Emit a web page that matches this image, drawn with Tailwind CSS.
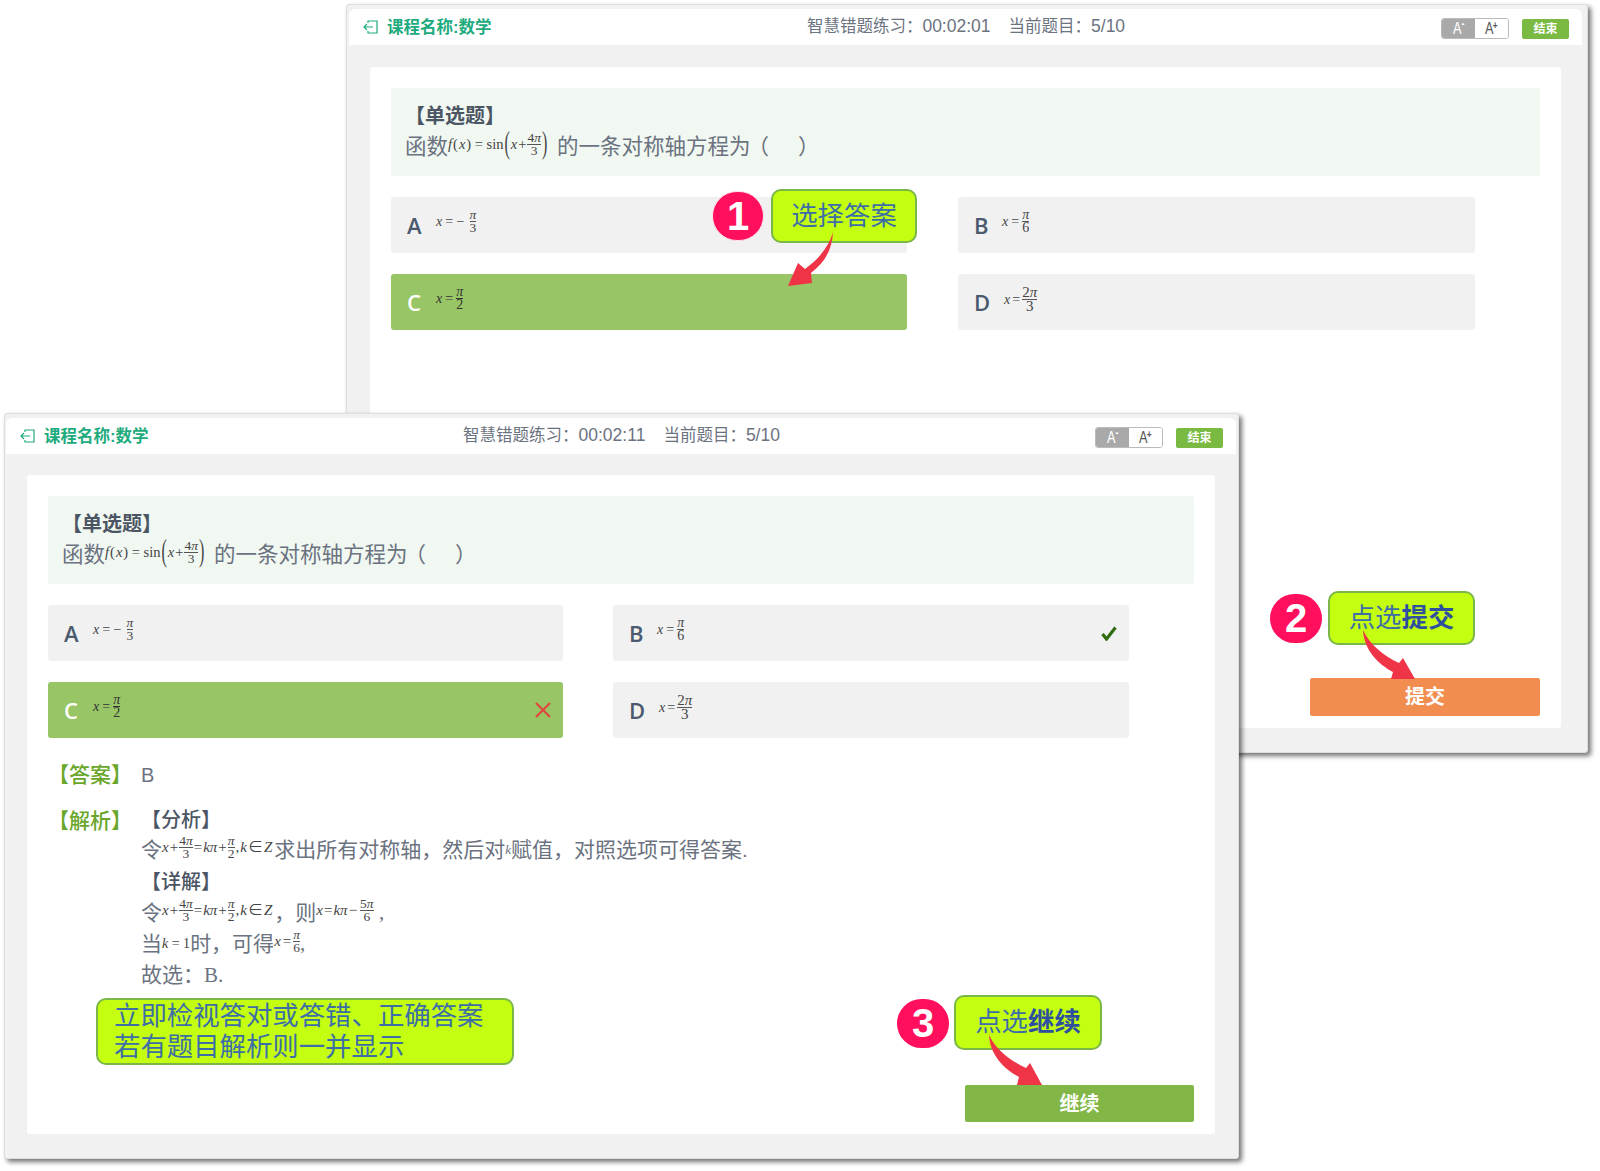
<!DOCTYPE html>
<html lang="zh-CN">
<head>
<meta charset="UTF-8">
<title>智慧错题练习</title>
<script src="https://cdn.jsdelivr.net/npm/@tailwindcss/browser@4"></script>
</head>
<body class="relative w-[1600px] h-[1171px] overflow-hidden bg-white font-['Liberation_Sans','Noto_Sans_CJK_SC',sans-serif] text-[#6b7280]">

<!-- back window: answer selection -->
<section class="absolute left-[346px] top-[4px] w-[1242px] h-[749px] flex flex-col bg-[#f1f1f1] border border-[#dedede] pl-[2px] pr-[5px] pt-[4px] pb-[2px] rounded-[3px] shadow-[3px_3px_5px_rgba(0,0,0,0.55)]">
  <header class="h-[36px] shrink-0 bg-white rounded-t-[6px] grid grid-cols-[1fr_auto_1fr] items-center pl-[14px] pr-[13px]">
    <div class="flex items-center gap-[9px] text-[16.5px] font-bold text-[#1dab7e]">
      <svg width="15" height="14" viewBox="0 0 15 14" fill="none" stroke="#1dab7e" stroke-width="1.2"><path d="M5 3V1h9v12H5v-2"/><path d="M10 7H1M4 4 1 7l3 3"/></svg>
      <span>课程名称:数学</span>
    </div>
    <div class="text-[16.5px] -mt-[1px]">智慧错题练习：<span class="text-[17.5px]">00:02:01</span><span class="ml-[18px]">当前题目：</span><span class="text-[17.5px]">5/10</span></div>
    <div class="flex items-center justify-end mt-[3px]">
      <div class="flex w-[68px] h-[21px] rounded-[3px] border border-[#bbb] overflow-hidden text-[17px]">
        <span class="w-1/2 bg-[#a9a9a9] text-white text-center leading-[19px]"><span class="inline-block scale-x-75">A<sup class="text-[12px] font-bold">-</sup></span></span>
        <span class="w-1/2 bg-white text-[#555] text-center leading-[19px]"><span class="inline-block scale-x-75">A<sup class="text-[11px] font-bold -ml-[1px]">+</sup></span></span>
      </div>
      <span class="ml-[13px] w-[47px] h-[20px] rounded-[2px] bg-[#7ab942] text-white text-[12px] font-bold text-center leading-[20px]">结束</span>
    </div>
  </header>
  <main class="flex-1 flex flex-col px-[21px] pt-[22px] pb-[23px]">
    <div class="flex-1 bg-white rounded-[3px] px-[21px] pt-[21px] pb-[12px]">
      <div class="h-[88px] bg-[#f1f8f2] rounded-[3px] pl-[14px] pt-[15px]">
        <div class="text-[20px] leading-[26px] font-bold text-[#4b5563]">【单选题】</div>
        <div class="flex items-center h-[34px] text-[21.5px] leading-[30px] mt-[1px]">
          <span>函数</span>
          <span class="inline-flex items-center gap-[1px] text-[14.5px] text-[#444] font-['Liberation_Serif'] -mt-[6px] w-[109px]"><i>f</i>(<i>x</i>)&nbsp;=&nbsp;sin<span class="inline-block text-[16px] scale-y-[2] -mt-[2px]">(</span><i>x</i>+<span class="inline-flex flex-col items-center text-[13.5px] leading-[12px]"><span class="border-b border-[#555]">4<i>π</i></span><span>3</span></span><span class="inline-block text-[16px] scale-y-[2] -mt-[2px]">)</span></span>
          <span>的一条对称轴方程为<span class="-ml-[3px]">（</span><span class="inline-block w-[17px]"></span>&nbsp; ）</span>
        </div>
      </div>
      <div class="grid grid-cols-[516px_517px] gap-x-[51px] gap-y-[21px] mt-[21px]">
        <div class="h-[56px] bg-[#f1f1f1] rounded-[3px] flex items-center pl-[16px]">
          <span class="w-[29px] text-[22px] font-semibold font-['Open_Sans'] text-[#4b5a6e]">A</span>
          <span class="inline-flex items-center gap-[3px] text-[14px] text-[#444] font-['Liberation_Serif'] -mt-[8px]"><i>x</i> = −<span class="ml-[2px] inline-flex flex-col items-center text-[13.5px] leading-[12px]"><span class="border-b border-[#555]"><i>π</i></span><span>3</span></span></span>
        </div>
        <div class="h-[56px] bg-[#f1f1f1] rounded-[3px] flex items-center pl-[16px]">
          <span class="w-[28px] text-[22px] font-semibold font-['Open_Sans'] text-[#4b5a6e]">B</span>
          <span class="inline-flex items-center gap-[3px] text-[14px] text-[#444] font-['Liberation_Serif'] -mt-[8px]"><i>x</i> = <span class="inline-flex flex-col items-center text-[14px] leading-[12px]"><span class="border-b border-[#555]"><i>π</i></span><span>6</span></span></span>
        </div>
        <div class="h-[56px] bg-[#98c566] rounded-[3px] flex items-center pl-[16px]">
          <span class="w-[29px] text-[22px] font-semibold font-['Open_Sans'] text-white">C</span>
          <span class="inline-flex items-center gap-[3px] text-[14px] text-[#333] font-['Liberation_Serif'] -mt-[8px]"><i>x</i> = <span class="inline-flex flex-col items-center text-[14px] leading-[12px]"><span class="border-b border-[#333]"><i>π</i></span><span>2</span></span></span>
        </div>
        <div class="h-[56px] bg-[#f1f1f1] rounded-[3px] flex items-center pl-[16px]">
          <span class="w-[30px] text-[22px] font-semibold font-['Open_Sans'] text-[#4b5a6e]">D</span>
          <span class="inline-flex items-center gap-[2px] text-[14px] text-[#444] font-['Liberation_Serif'] -mt-[6px]"><i>x</i> = <span class="inline-flex flex-col items-center text-[15px] leading-[13px]"><span class="border-b border-[#555]">2<i>π</i></span><span>3</span></span></span>
        </div>
      </div>
      <div class="flex justify-end mt-[348px]">
        <button class="w-[230px] h-[38px] bg-[#f08d4f] rounded-[2px] text-white text-[20px] font-bold">提交</button>
      </div>
    </div>
  </main>
</section>

<!-- front window: result and explanation -->
<section class="absolute left-[4px] top-[413px] w-[1235px] h-[746px] flex flex-col bg-[#f1f1f1] border border-[#dedede] pl-[1px] pr-[2px] pt-[4px] pb-[2px] rounded-[3px] shadow-[3px_3px_5px_rgba(0,0,0,0.55)]">
  <header class="h-[36px] shrink-0 bg-white rounded-t-[6px] grid grid-cols-[1fr_auto_1fr] items-center pl-[14px] pr-[13px]">
    <div class="flex items-center gap-[9px] text-[16.5px] font-bold text-[#1dab7e]">
      <svg width="15" height="14" viewBox="0 0 15 14" fill="none" stroke="#1dab7e" stroke-width="1.2"><path d="M5 3V1h9v12H5v-2"/><path d="M10 7H1M4 4 1 7l3 3"/></svg>
      <span>课程名称:数学</span>
    </div>
    <div class="text-[16.5px] -mt-[1px]">智慧错题练习：<span class="text-[17.5px]">00:02:11</span><span class="ml-[18px]">当前题目：</span><span class="text-[17.5px]">5/10</span></div>
    <div class="flex items-center justify-end mt-[3px]">
      <div class="flex w-[68px] h-[21px] rounded-[3px] border border-[#bbb] overflow-hidden text-[17px]">
        <span class="w-1/2 bg-[#a9a9a9] text-white text-center leading-[19px]"><span class="inline-block scale-x-75">A<sup class="text-[12px] font-bold">-</sup></span></span>
        <span class="w-1/2 bg-white text-[#555] text-center leading-[19px]"><span class="inline-block scale-x-75">A<sup class="text-[11px] font-bold -ml-[1px]">+</sup></span></span>
      </div>
      <span class="ml-[13px] w-[47px] h-[20px] rounded-[2px] bg-[#7ab942] text-white text-[12px] font-bold text-center leading-[20px]">结束</span>
    </div>
  </header>
  <main class="flex-1 flex flex-col px-[21px] pt-[21px] pb-[22px]">
    <div class="flex-1 bg-white rounded-[3px] px-[21px] pt-[21px] pb-[11px]">
      <div class="h-[88px] bg-[#f1f8f2] rounded-[3px] pl-[14px] pt-[15px]">
        <div class="text-[20px] leading-[26px] font-bold text-[#4b5563]">【单选题】</div>
        <div class="flex items-center h-[34px] text-[21.5px] leading-[30px] mt-[1px]">
          <span>函数</span>
          <span class="inline-flex items-center gap-[1px] text-[14.5px] text-[#444] font-['Liberation_Serif'] -mt-[6px] w-[109px]"><i>f</i>(<i>x</i>)&nbsp;=&nbsp;sin<span class="inline-block text-[16px] scale-y-[2] -mt-[2px]">(</span><i>x</i>+<span class="inline-flex flex-col items-center text-[13.5px] leading-[12px]"><span class="border-b border-[#555]">4<i>π</i></span><span>3</span></span><span class="inline-block text-[16px] scale-y-[2] -mt-[2px]">)</span></span>
          <span>的一条对称轴方程为<span class="-ml-[3px]">（</span><span class="inline-block w-[17px]"></span>&nbsp; ）</span>
        </div>
      </div>
      <div class="grid grid-cols-[515px_516px] gap-x-[50px] gap-y-[21px] mt-[21px]">
        <div class="h-[56px] bg-[#f1f1f1] rounded-[3px] flex items-center pl-[16px]">
          <span class="w-[29px] text-[22px] font-semibold font-['Open_Sans'] text-[#4b5a6e]">A</span>
          <span class="inline-flex items-center gap-[3px] text-[14px] text-[#444] font-['Liberation_Serif'] -mt-[8px]"><i>x</i> = −<span class="ml-[2px] inline-flex flex-col items-center text-[13.5px] leading-[12px]"><span class="border-b border-[#555]"><i>π</i></span><span>3</span></span></span>
        </div>
        <div class="h-[56px] bg-[#f1f1f1] rounded-[3px] flex items-center justify-between pl-[16px] pr-[12px]">
          <span class="flex items-center">
            <span class="w-[28px] text-[22px] font-semibold font-['Open_Sans'] text-[#4b5a6e]">B</span>
            <span class="inline-flex items-center gap-[3px] text-[14px] text-[#444] font-['Liberation_Serif'] -mt-[8px]"><i>x</i> = <span class="inline-flex flex-col items-center text-[14px] leading-[12px]"><span class="border-b border-[#555]"><i>π</i></span><span>6</span></span></span>
          </span>
          <svg width="16" height="15" viewBox="0 0 16 15" fill="none" stroke="#2f6b10" stroke-width="3.2"><path d="M1.5 8 5.5 13 14.5 1.5"/></svg>
        </div>
        <div class="h-[56px] bg-[#98c566] rounded-[3px] flex items-center justify-between pl-[16px] pr-[12px]">
          <span class="flex items-center">
            <span class="w-[29px] text-[22px] font-semibold font-['Open_Sans'] text-white">C</span>
            <span class="inline-flex items-center gap-[3px] text-[14px] text-[#333] font-['Liberation_Serif'] -mt-[8px]"><i>x</i> = <span class="inline-flex flex-col items-center text-[14px] leading-[12px]"><span class="border-b border-[#333]"><i>π</i></span><span>2</span></span></span>
          </span>
          <svg width="16" height="16" viewBox="0 0 16 16" fill="none" stroke="#e0483e" stroke-width="2.2"><path d="M1 1 15 15M15 1 1 15"/></svg>
        </div>
        <div class="h-[56px] bg-[#f1f1f1] rounded-[3px] flex items-center pl-[16px]">
          <span class="w-[30px] text-[22px] font-semibold font-['Open_Sans'] text-[#4b5a6e]">D</span>
          <span class="inline-flex items-center gap-[2px] text-[14px] text-[#444] font-['Liberation_Serif'] -mt-[6px]"><i>x</i> = <span class="inline-flex flex-col items-center text-[15px] leading-[13px]"><span class="border-b border-[#555]">2<i>π</i></span><span>3</span></span></span>
        </div>
      </div>

      <div class="flex h-[30px] items-center mt-[22px] text-[21px]">
        <span class="w-[93px] shrink-0 font-medium text-[#6aa62b]">【答案】</span>
        <span class="text-[20px]">B</span>
      </div>
      <div class="flex mt-[15px]">
        <span class="w-[93px] shrink-0 text-[21px] leading-[31.2px] font-medium text-[#6aa62b]">【解析】</span>
        <div class="text-[21px] leading-[31.2px]">
          <div class="text-[20px] font-medium text-[#4b5563] h-[29.2px]">【分析】</div>
          <div class="flex items-center h-[31.2px]">令<span class="inline-flex items-center gap-[1px] text-[15px] text-[#444] font-['Liberation_Serif'] -mt-[4px] mr-[2px] leading-none"><i>x</i>+<span class="inline-flex flex-col items-center text-[13.5px] leading-[12px]"><span class="border-b border-[#555]">4<i>π</i></span><span>3</span></span>=<i>kπ</i>+<span class="inline-flex flex-col items-center text-[13.5px] leading-[12px]"><span class="border-b border-[#555]"><i>π</i></span><span>2</span></span>,<i>k</i>∈<i>Z</i></span>求出所有对称轴，然后对<i class="text-[13px] font-['Liberation_Serif']">k</i>赋值，对照选项可得答案.</div>
          <div class="text-[20px] font-medium text-[#4b5563] translate-y-[2px]">【详解】</div>
          <div class="flex items-center h-[31.2px]">令<span class="inline-flex items-center gap-[1px] text-[15px] text-[#444] font-['Liberation_Serif'] -mt-[4px] mr-[2px] leading-none"><i>x</i>+<span class="inline-flex flex-col items-center text-[13.5px] leading-[12px]"><span class="border-b border-[#555]">4<i>π</i></span><span>3</span></span>=<i>kπ</i>+<span class="inline-flex flex-col items-center text-[13.5px] leading-[12px]"><span class="border-b border-[#555]"><i>π</i></span><span>2</span></span>,<i>k</i>∈<i>Z</i></span>，则<span class="inline-flex items-center gap-[1px] text-[15px] text-[#444] font-['Liberation_Serif'] -mt-[4px] leading-none"><i>x</i>=<i>kπ</i> − <span class="ml-[2px] inline-flex flex-col items-center text-[13.5px] leading-[12px]"><span class="border-b border-[#555]">5<i>π</i></span><span>6</span></span></span><span class="font-['Liberation_Serif']">&nbsp;,</span></div>
          <div class="flex items-center h-[31.2px]">当<span class="text-[14px] text-[#444] font-['Liberation_Serif']"><i>k</i> = 1</span>时，可得<span class="inline-flex items-center gap-[2px] text-[15px] text-[#444] font-['Liberation_Serif'] -mt-[4px] leading-none"><i>x</i>=<span class="inline-flex flex-col items-center text-[13.5px] leading-[12px]"><span class="border-b border-[#555]"><i>π</i></span><span>6</span></span></span><span class="font-['Liberation_Serif']">,</span></div>
          <div>故选：<span class="font-['Liberation_Serif']">B.</span></div>
        </div>
      </div>
      <div class="flex justify-end mt-[94px]">
        <button class="w-[229px] h-[37px] bg-[#82b747] rounded-[2px] text-white text-[20px] font-bold">继续</button>
      </div>
    </div>
  </main>
</section>

<!-- annotations laid over the two windows -->
<div class="absolute left-[712px] top-[191px] w-[52px] h-[50px] rounded-full bg-[#ff0f5c] border border-[#ffe3ec] text-white text-[40px] font-bold leading-[48px] text-center">1</div>
<div class="absolute left-[771px] top-[189px] w-[146px] h-[54px] rounded-[10px] bg-[#c4ff12] border-2 border-[#7ab648] text-[#3d6ea6] text-[26.4px] leading-[50px] text-center">选择答案</div>

<div class="absolute left-[1270px] top-[594px] w-[52px] h-[49px] rounded-full bg-[#ff0f5c] text-white text-[40px] font-bold leading-[49px] text-center">2</div>
<div class="absolute left-[1328px] top-[591px] w-[147px] h-[54px] rounded-[10px] bg-[#c4ff12] border-2 border-[#7ab648] text-[#3d6ea6] text-[26.4px] leading-[50px] text-center">点选<b class="text-[#2f4f9f]">提交</b></div>

<div class="absolute left-[897px] top-[999px] w-[52px] h-[49px] rounded-full bg-[#ff0f5c] text-white text-[40px] font-bold leading-[49px] text-center">3</div>
<div class="absolute left-[954px] top-[995px] w-[148px] h-[55px] rounded-[10px] bg-[#c4ff12] border-2 border-[#7ab648] text-[#3d6ea6] text-[26.4px] leading-[51px] text-center">点选<b class="text-[#2f4f9f]">继续</b></div>

<div class="absolute left-[96px] top-[998px] w-[418px] h-[67px] rounded-[10px] bg-[#c4ff12] border-2 border-[#7ab648] text-[#3d6ea6] text-[26.4px] leading-[31px] pl-[16px] pt-[1px]">立即检视答对或答错、正确答案<br>若有题目解析则一并显示</div>

<svg class="absolute left-0 top-0 pointer-events-none" width="1600" height="1171" viewBox="0 0 1600 1171">
  <g fill="#ee3446">
    <path d="M833 232C832 250 825 262 811 273L812 283 788 286 798 263 805 269C820 258 829 246 833 232Z"/>
    <path d="M1363 630C1364 650 1378 664 1393 672L1391 679H1415L1403 658 1399 663C1384 656 1370 645 1363 630Z"/>
    <path d="M989 1035C990 1055 1004 1069 1019 1077L1017 1085H1042L1030 1063 1026 1068C1011 1061 996 1050 989 1035Z"/>
  </g>
</svg>

</body>
</html>
